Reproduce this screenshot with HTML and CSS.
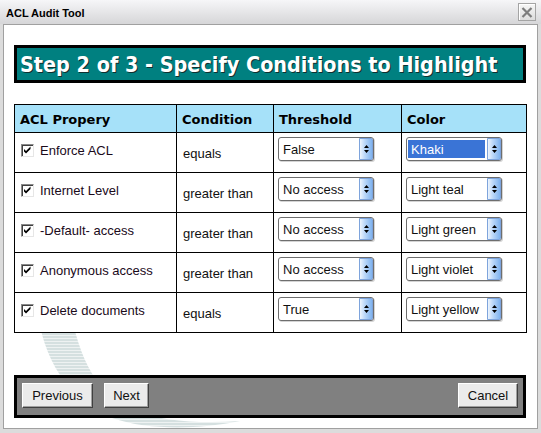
FILE: index.html
```html
<!DOCTYPE html>
<html>
<head>
<meta charset="utf-8">
<link rel="stylesheet" href="styles.css">
</head>
<body>
<div class="window">
  <div class="titlebar">
    <span class="title">ACL Audit Tool</span>
    <span class="close"><svg width="12" height="11" viewBox="0 0 12 11"><path d="M1.5 1 L10.5 10 M10.5 1 L1.5 10" stroke="#7c7c7c" stroke-width="2.2" fill="none"/></svg></span>
  </div>
  <div class="frame">
    <div class="client">
      <svg class="deco" width="533" height="403" viewBox="0 0 533 403">
        <defs>
          <pattern id="stripe" patternUnits="userSpaceOnUse" width="4" height="3">
            <rect x="0" y="0" width="4" height="2" fill="#c3d3d3"/>
            <rect x="0" y="2" width="4" height="1" fill="#e6eded"/>
          </pattern>
          <linearGradient id="fadeL" x1="0" x2="1" y1="0" y2="0">
            <stop offset="0" stop-color="#e2e7e7"/>
            <stop offset="1" stop-color="#ffffff"/>
          </linearGradient>
          <linearGradient id="fadeR" x1="0" x2="1" y1="0" y2="0">
            <stop offset="0" stop-color="#ffffff"/>
            <stop offset="0.5" stop-color="#ebf0f0"/>
            <stop offset="1" stop-color="#ffffff"/>
          </linearGradient>
        </defs>
        <g transform="translate(-4,-25)">
          <g stroke="url(#fadeL)" stroke-width="1.5">
            <line x1="0" y1="337" x2="135" y2="337"/>
            <line x1="0" y1="341" x2="130" y2="341"/>
            <line x1="0" y1="345" x2="125" y2="345"/>
            <line x1="0" y1="349" x2="120" y2="349"/>
            <line x1="0" y1="353" x2="118" y2="353"/>
            <line x1="0" y1="357" x2="115" y2="357"/>
            <line x1="0" y1="361" x2="112" y2="361"/>
            <line x1="0" y1="365" x2="110" y2="365"/>
            <line x1="0" y1="369" x2="108" y2="369"/>
          </g>
          <g stroke="url(#fadeR)" stroke-width="1.5">
            <line x1="300" y1="340" x2="480" y2="340"/>
            <line x1="280" y1="345" x2="460" y2="345"/>
            <line x1="270" y1="350" x2="440" y2="350"/>
            <line x1="260" y1="355" x2="420" y2="355"/>
            <line x1="250" y1="360" x2="400" y2="360"/>
            <line x1="240" y1="365" x2="380" y2="365"/>
            <line x1="230" y1="370" x2="360" y2="370"/>
            <line x1="120" y1="423" x2="300" y2="423"/>
            <line x1="130" y1="426" x2="320" y2="426"/>
            <line x1="380" y1="87" x2="540" y2="87"/>
            <line x1="400" y1="92" x2="540" y2="92"/>
            <line x1="380" y1="97" x2="540" y2="97"/>
          </g>
          <path d="M36,300 C40,345 58,395 112,418 C150,431 200,429 240,421 C200,424 160,421 132,410 C98,393 80,365 68,300 Z" fill="url(#stripe)" opacity="0.7"/>
        </g>
      </svg>

      <div class="banner"><h1 class="banner-text">Step 2 of 3 - Specify Conditions to Highlight</h1></div>

      <table class="grid">
        <colgroup>
          <col class="c1"><col class="c2"><col class="c3"><col class="c4">
        </colgroup>
        <thead>
          <tr class="head-row">
            <th>ACL Propery</th><th>Condition</th><th>Threshold</th><th>Color</th>
          </tr>
        </thead>
        <tbody>
          <tr class="row">
            <td class="prop"><div class="prop-in"><span class="cb"><svg width="11" height="11" viewBox="0 0 11 11"><path d="M2 4 L4 6 L8.5 1.5 L8.5 4 L4 8.5 L2 6.5 Z" fill="#000"/></svg></span><span>Enforce ACL</span></div></td>
            <td class="cond">equals</td>
            <td class="pick"><div class="sel"><span class="sel-val">False</span><span class="sel-arrow"><svg width="7" height="10" viewBox="0 0 7 10"><path d="M3.5 1 L6 4 L1 4 Z M1 6 L6 6 L3.5 9 Z" fill="#000"/></svg></span></div></td>
            <td class="pick"><div class="sel"><span class="sel-val hl">Khaki</span><span class="sel-arrow"><svg width="7" height="10" viewBox="0 0 7 10"><path d="M3.5 1 L6 4 L1 4 Z M1 6 L6 6 L3.5 9 Z" fill="#000"/></svg></span></div></td>
          </tr>
          <tr class="row">
            <td class="prop"><div class="prop-in"><span class="cb"><svg width="11" height="11" viewBox="0 0 11 11"><path d="M2 4 L4 6 L8.5 1.5 L8.5 4 L4 8.5 L2 6.5 Z" fill="#000"/></svg></span><span>Internet Level</span></div></td>
            <td class="cond">greater than</td>
            <td class="pick"><div class="sel"><span class="sel-val">No access</span><span class="sel-arrow"><svg width="7" height="10" viewBox="0 0 7 10"><path d="M3.5 1 L6 4 L1 4 Z M1 6 L6 6 L3.5 9 Z" fill="#000"/></svg></span></div></td>
            <td class="pick"><div class="sel"><span class="sel-val">Light teal</span><span class="sel-arrow"><svg width="7" height="10" viewBox="0 0 7 10"><path d="M3.5 1 L6 4 L1 4 Z M1 6 L6 6 L3.5 9 Z" fill="#000"/></svg></span></div></td>
          </tr>
          <tr class="row">
            <td class="prop"><div class="prop-in"><span class="cb"><svg width="11" height="11" viewBox="0 0 11 11"><path d="M2 4 L4 6 L8.5 1.5 L8.5 4 L4 8.5 L2 6.5 Z" fill="#000"/></svg></span><span>-Default- access</span></div></td>
            <td class="cond">greater than</td>
            <td class="pick"><div class="sel"><span class="sel-val">No access</span><span class="sel-arrow"><svg width="7" height="10" viewBox="0 0 7 10"><path d="M3.5 1 L6 4 L1 4 Z M1 6 L6 6 L3.5 9 Z" fill="#000"/></svg></span></div></td>
            <td class="pick"><div class="sel"><span class="sel-val">Light green</span><span class="sel-arrow"><svg width="7" height="10" viewBox="0 0 7 10"><path d="M3.5 1 L6 4 L1 4 Z M1 6 L6 6 L3.5 9 Z" fill="#000"/></svg></span></div></td>
          </tr>
          <tr class="row">
            <td class="prop"><div class="prop-in"><span class="cb"><svg width="11" height="11" viewBox="0 0 11 11"><path d="M2 4 L4 6 L8.5 1.5 L8.5 4 L4 8.5 L2 6.5 Z" fill="#000"/></svg></span><span>Anonymous access</span></div></td>
            <td class="cond">greater than</td>
            <td class="pick"><div class="sel"><span class="sel-val">No access</span><span class="sel-arrow"><svg width="7" height="10" viewBox="0 0 7 10"><path d="M3.5 1 L6 4 L1 4 Z M1 6 L6 6 L3.5 9 Z" fill="#000"/></svg></span></div></td>
            <td class="pick"><div class="sel"><span class="sel-val">Light violet</span><span class="sel-arrow"><svg width="7" height="10" viewBox="0 0 7 10"><path d="M3.5 1 L6 4 L1 4 Z M1 6 L6 6 L3.5 9 Z" fill="#000"/></svg></span></div></td>
          </tr>
          <tr class="row">
            <td class="prop"><div class="prop-in"><span class="cb"><svg width="11" height="11" viewBox="0 0 11 11"><path d="M2 4 L4 6 L8.5 1.5 L8.5 4 L4 8.5 L2 6.5 Z" fill="#000"/></svg></span><span>Delete documents</span></div></td>
            <td class="cond">equals</td>
            <td class="pick"><div class="sel"><span class="sel-val">True</span><span class="sel-arrow"><svg width="7" height="10" viewBox="0 0 7 10"><path d="M3.5 1 L6 4 L1 4 Z M1 6 L6 6 L3.5 9 Z" fill="#000"/></svg></span></div></td>
            <td class="pick"><div class="sel"><span class="sel-val">Light yellow</span><span class="sel-arrow"><svg width="7" height="10" viewBox="0 0 7 10"><path d="M3.5 1 L6 4 L1 4 Z M1 6 L6 6 L3.5 9 Z" fill="#000"/></svg></span></div></td>
          </tr>
        </tbody>
      </table>

      <div class="footer">
        <div class="nav">
          <button class="btn btn-prev">Previous</button>
          <button class="btn btn-next">Next</button>
        </div>
        <button class="btn btn-cancel">Cancel</button>
      </div>
    </div>
  </div>
</div>
</body>
</html>
```

FILE: styles.css
```css
html, body {
  margin: 0;
  padding: 0;
  background: #dcdcdc;
}

body {
  font-family: "Liberation Sans", Arial, sans-serif;
  font-size: 13px;
  color: #111;
}

.window {
  width: 541px;
  height: 433px;
  box-sizing: border-box;
  background: #dcdcdc;
  display: flex;
  flex-direction: column;
}

.titlebar {
  flex: none;
  height: 24px;
  box-sizing: border-box;
  display: flex;
  align-items: center;
  justify-content: space-between;
  padding: 0 5px 0 6px;
  background: linear-gradient(#f6f6f8, #d6d6d8);
}

.title {
  font-family: "Liberation Sans", Arial, sans-serif;
  font-weight: bold;
  font-size: 11px;
  color: #000;
  padding-top: 2px;
}

.close {
  width: 18px;
  height: 18px;
  box-sizing: border-box;
  border: 1px solid #a4a4a4;
  background: linear-gradient(#f6f6f6, #dcdcdc);
  box-shadow: inset 1px 1px 0 #fff;
  display: flex;
  align-items: center;
  justify-content: center;
}

.frame {
  flex: 1;
  display: flex;
  padding: 0 3px 4px 3px;
}

.client {
  flex: 1;
  position: relative;
  background: #fff;
  border: 1px solid #a0a0a0;
  overflow: hidden;
}

.deco {
  position: absolute;
  left: 0;
  top: 0;
}

.banner {
  position: relative;
  margin: 20px 0 0 10px;
  width: 512px;
  height: 38px;
  box-sizing: border-box;
  border: 3px solid #000;
  background: #008080;
  padding-left: 3px;
  display: flex;
  align-items: center;
}

.banner-text {
  margin: 0;
  font-family: "DejaVu Sans Condensed", "DejaVu Sans", sans-serif;
  font-stretch: condensed;
  font-weight: bold;
  font-size: 21.4px;
  color: #fff;
  text-shadow: 1px 1px 0 #103030;
  white-space: nowrap;
}

.grid {
  position: relative;
  margin: 21px 0 0 10px;
  width: 512px;
  border-collapse: collapse;
  table-layout: fixed;
  background: #fff;
}

.c1 { width: 162px; }
.c2 { width: 97px; }
.c3 { width: 128px; }
.c4 { width: 125px; }

.grid th,
.grid td {
  border: 1px solid #000;
  padding: 0;
}

.head-row {
  height: 28px;
}

.grid th {
  background: #a6e1f9;
  text-align: left;
  vertical-align: middle;
  padding: 1px 5px 0 5px;
  font-family: "DejaVu Sans", Verdana, sans-serif;
  font-weight: bold;
  font-size: 13px;
  color: #000;
}

.row {
  height: 40px;
}

.grid td {
  vertical-align: top;
  line-height: 16px;
}

.prop {
  padding: 10px 5px 0 6px !important;
}

.prop-in {
  display: flex;
  align-items: flex-start;
  gap: 6px;
  color: #1a0a1a;
}

.cb {
  flex: none;
  width: 13px;
  height: 13px;
  margin-top: 1px;
  box-sizing: border-box;
  border: 1px solid;
  border-color: #8a8a8a #e6e6e6 #e6e6e6 #8a8a8a;
  box-shadow: inset 1px 1px 0 #404040;
  background: #fff;
  display: flex;
  align-items: center;
  justify-content: center;
}

.cond {
  padding: 13px 5px 0 6px !important;
}

.pick {
  padding: 4px 4px 0 4px !important;
}

.sel {
  width: 96px;
  height: 24px;
  box-sizing: border-box;
  border: 1px solid #6e6e6e;
  border-radius: 3px;
  background: #fff;
  box-shadow: 1px 1px 0 #d4d4d4;
  display: flex;
}

.sel-val {
  flex: 1;
  height: 18px;
  margin: 2px 2px 0 1px;
  padding-left: 3px;
  line-height: 16px;
  padding-top: 2px;
  box-sizing: border-box;
  white-space: nowrap;
  overflow: hidden;
  color: #111;
}

.sel-val.hl {
  background: #3a74d6;
  color: #fff;
}

.sel-arrow {
  flex: none;
  width: 14px;
  box-sizing: border-box;
  border: 1px solid #7ea4dc;
  border-radius: 0 2px 2px 0;
  background: linear-gradient(to right, #eef5fd 0%, #bcd8f8 40%, #7fb3ef 100%);
  display: flex;
  align-items: center;
  justify-content: center;
}

.footer {
  position: relative;
  margin: 42px 0 0 10px;
  width: 512px;
  height: 43px;
  box-sizing: border-box;
  border: 3px solid #000;
  background: #808080;
  display: flex;
  justify-content: space-between;
  align-items: flex-start;
  padding: 5px 5px 0 5px;
}

.nav {
  display: flex;
  gap: 11px;
}

.btn {
  height: 25px;
  box-sizing: border-box;
  padding: 0;
  margin: 0;
  border: 1px solid;
  border-color: #ffffff #404040 #404040 #ffffff;
  box-shadow: inset -1px -1px 0 #a0a0a0;
  background: #ebebeb;
  font-family: "Liberation Sans", Arial, sans-serif;
  font-size: 13px;
  color: #111;
}

.btn-prev { width: 71px; }
.btn-next { width: 45px; }
.btn-cancel { width: 60px; }
```
